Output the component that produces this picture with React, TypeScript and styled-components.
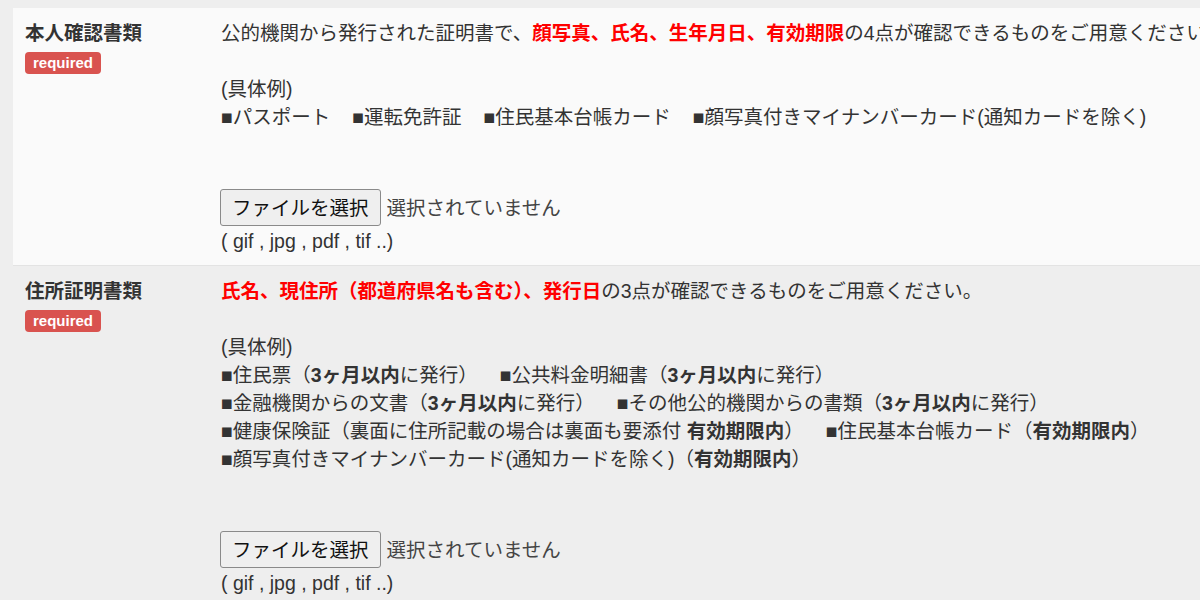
import React from "react";
import styled, { createGlobalStyle } from "styled-components";

const GlobalStyle = createGlobalStyle`
  html, body {
    margin: 0;
    padding: 0;
    background: #eeeeee;
    overflow: hidden;
  }
  body {
    font-family: "Liberation Sans", "Noto Sans CJK JP", sans-serif;
    color: #333333;
    font-size: 19.5px;
    line-height: 28px;
  }
`;

const Page = styled.div`
  padding: 8px 0 0 13px;
  width: 1500px;
`;

const Row = styled.div<{ $alt?: boolean }>`
  display: flex;
  background: ${(p) => (p.$alt ? "#eeeeee" : "#fafafa")};
  border-bottom: 1px solid ${(p) => (p.$alt ? "transparent" : "#e3e3e3")};
`;

const Head = styled.div`
  box-sizing: border-box;
  width: 208px;
  flex: none;
  padding: 11px 12px 10px 12px;
`;

const Label = styled.div`
  font-weight: bold;
  line-height: 28px;
  color: #333333;
`;

const Badge = styled.span`
  display: inline-block;
  margin-top: 5px;
  height: 22px;
  line-height: 22px;
  padding: 0 8px;
  border-radius: 4px;
  background: #d9534f;
  color: #ffffff;
  font-family: "Liberation Sans", sans-serif;
  font-weight: bold;
  font-size: 15px;
`;

const Body = styled.div`
  flex: 1;
  padding: 11px 0 10px 0;
  white-space: nowrap;
`;

const Line = styled.div`
  height: 28px;
`;

const Red = styled.strong`
  color: #ff0000;
  font-weight: bold;
`;

const B = styled.strong`
  font-weight: bold;
  color: #333333;
`;

const Gap = styled.span`
  display: inline-block;
  width: 22px;
`;

const FileRow = styled.div`
  display: flex;
  align-items: center;
  margin-top: 58px;
  height: 37px;
`;

const FileButton = styled.button`
  box-sizing: border-box;
  height: 37px;
  margin: 0 0 0 -1px;
  padding: 0 11px;
  border: 1px solid #8a8a8a;
  border-radius: 3px;
  background: #efefef;
  color: #111111;
  font-family: "Liberation Sans", "Noto Sans CJK JP", sans-serif;
  font-size: 19.5px;
  line-height: 28px;
`;

const FileStatus = styled.span`
  margin-left: 6px;
  color: #444444;
`;

const Ext = styled.div`
  margin-top: 1px;
  line-height: 28px;
  color: #333333;
`;

const FilePicker = () => (
  <>
    <FileRow>
      <FileButton type="button">ファイルを選択</FileButton>
      <FileStatus>選択されていません</FileStatus>
    </FileRow>
    <Ext>( gif , jpg , pdf , tif ..)</Ext>
  </>
);

export default function App() {
  return (
    <>
      <GlobalStyle />
      <Page>
        <Row>
          <Head>
            <Label>本人確認書類</Label>
            <Badge>required</Badge>
          </Head>
          <Body>
            <Line>
              公的機関から発行された証明書で、
              <Red>顔写真、氏名、生年月日、有効期限</Red>
              の4点が確認できるものをご用意ください。
            </Line>
            <Line />
            <Line>(具体例)</Line>
            <Line>
              ■パスポート<Gap />■運転免許証<Gap />■住民基本台帳カード<Gap />
              ■顔写真付きマイナンバーカード(通知カードを除く)
            </Line>
            <FilePicker />
          </Body>
        </Row>
        <Row $alt>
          <Head>
            <Label>住所証明書類</Label>
            <Badge>required</Badge>
          </Head>
          <Body>
            <Line>
              <Red>氏名、現住所（都道府県名も含む）、発行日</Red>
              の3点が確認できるものをご用意ください。
            </Line>
            <Line />
            <Line>(具体例)</Line>
            <Line>
              ■住民票（<B>3ヶ月以内</B>に発行）<Gap />■公共料金明細書（<B>3ヶ月以内</B>に発行）
            </Line>
            <Line>
              ■金融機関からの文書（<B>3ヶ月以内</B>に発行）<Gap />■その他公的機関からの書類（
              <B>3ヶ月以内</B>に発行）
            </Line>
            <Line>
              ■健康保険証（裏面に住所記載の場合は裏面も要添付 <B>有効期限内</B>）<Gap />
              ■住民基本台帳カード（<B>有効期限内</B>）
            </Line>
            <Line>
              ■顔写真付きマイナンバーカード(通知カードを除く)（<B>有効期限内</B>）
            </Line>
            <FilePicker />
          </Body>
        </Row>
      </Page>
    </>
  );
}
